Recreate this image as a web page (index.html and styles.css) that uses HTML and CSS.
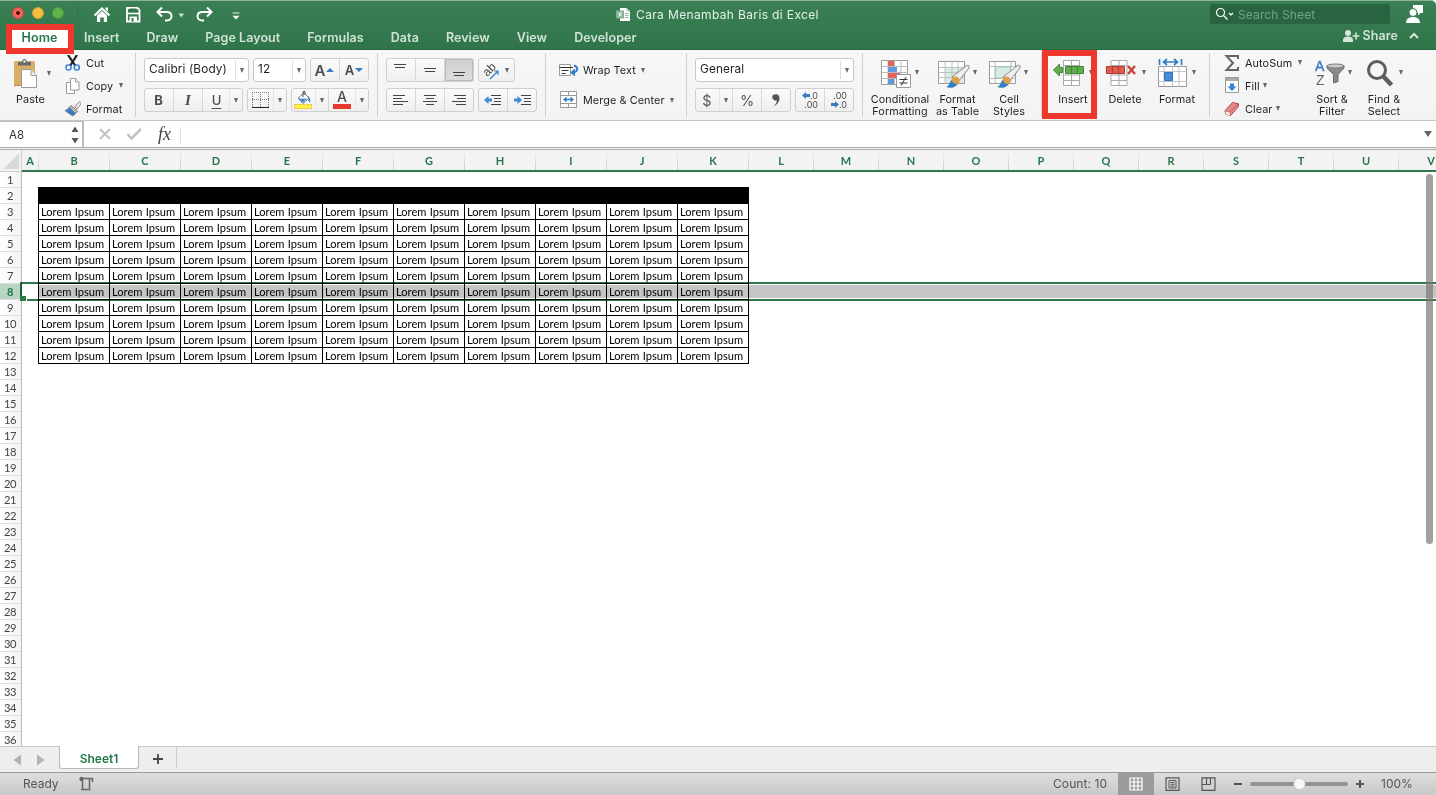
FILE: index.html
```html
<!DOCTYPE html>
<html lang="en">
<head>
<meta charset="utf-8">
<title>Cara Menambah Baris di Excel</title>
<link rel="stylesheet" href="styles.css">
</head>
<body>
<div class="app">
  <header class="top">
    <div class="titlebar">
      <div class="lights"><i class="light red"></i><i class="light yellow"></i><i class="light green"></i></div>
      <svg class="quick" width="160" height="20" viewBox="0 0 160 20" fill="none" stroke="#fff" stroke-width="2">
        <path d="M2.500 11.500 10 4.500l7.500 7" stroke-width="2.200"/><path d="M5 11.500 10 7l5 4.500V18h-3.200v-4.500H8.200V18H5z" fill="#fff" stroke="none"/><path d="M13.500 3.500h2.500v4l-2.500-2z" fill="#fff" stroke="none"/>
        <path d="M35 4h10.500l2 2v11.500H35z" stroke-width="1.800"/><path d="M37.500 4.500h7v4h-7z" fill="#2f774a" stroke="none"/><path d="M35.500 9.500h11.500" stroke-width="1.600"/><path d="M37.500 12.500h7.500v5h-7.500z" fill="#fff" stroke="none"/><path d="M39.500 14h2v3.500h-2z" fill="#2f774a" stroke="none"/>
        <path d="M70 3.500 65.500 8l4.500 4.500M66 8h8.500c3.500 0 5 2 5 4.200 0 2.500-2 4.300-4.500 4.300h-2"/>
        <path d="M86.500 9.500h5.500l-2.700 4z" fill="#cfe2d6" stroke="none"/>
        <path d="m115 3.500 4.500 4.500-4.500 4.500M119 8h-8.500c-3.500 0-5 2-5 4.200 0 2.500 2 4.300 4.500 4.300h2"/>
        <path d="M140.500 9h7" stroke-width="1.200" stroke="#cfe2d6"/><path d="M140.500 11.800h7L144 15.500z" fill="#fff" stroke="none"/>
      </svg>
      <div class="doc">
        <svg width="15" height="15" viewBox="0 0 15 15"><path d="M4 1h6.500L14 4.500V14H4z" fill="#fff"/><path d="M10.500 1v3.500H14" fill="#b9d3c3"/><path d="M9 6.500h3.500M9 8.500h3.500M9 10.500h3.500" stroke="#8bb69c"/><path d="M0 3.500h8v8H0z" fill="#7fb495"/><path d="m2.300 5.500 3.500 4m0-4-3.500 4" stroke="#fff" stroke-width="1.100"/></svg>
        <span>Cara Menambah Baris di Excel</span>
      </div>
      <div class="search">
        <svg width="22" height="16" viewBox="0 0 22 16" fill="none" stroke="#fff" stroke-width="1.200"><circle cx="6.500" cy="6.500" r="4"/><path d="m9.500 9.500 4 4M15 7l2 2 2-2"/></svg>
        <span>Search Sheet</span>
      </div>
      <svg class="person" width="20" height="20" viewBox="0 0 20 20" fill="#fff"><path d="M8 1h10v8h-2.500L13 11.500V9L8 6z"/><circle cx="8" cy="8.500" r="4" stroke="#327a4e"/><path d="M1 19c0-4 3-6 7-6s7 2 7 6z"/></svg>
    </div>
    <nav class="tabs">
      <span class="tab active">Home</span><span class="tab">Insert</span><span class="tab">Draw</span><span class="tab">Page Layout</span><span class="tab">Formulas</span><span class="tab">Data</span><span class="tab">Review</span><span class="tab">View</span><span class="tab">Developer</span>
      <div class="share">
        <svg width="18" height="14" viewBox="0 0 18 14" fill="#d5e5db"><circle cx="6" cy="4" r="3"/><path d="M1 13V11c0-2.500 2-3.500 5-3.500s5 1 5 3.500v2zM13.200 3.500h1.600v2.700h2.700v1.600h-2.700v2.700h-1.600V7.800h-2.700V6.200h2.700z"/></svg>
        <span>Share</span>
        <svg width="12" height="8" viewBox="0 0 12 8" fill="none" stroke="#d5e5db" stroke-width="2"><path d="m2 6 4-4 4 4"/></svg>
      </div>
    </nav>
    <div class="callout home-callout"></div>
  </header>

  <section class="ribbon">
    <div class="group clipboard">
      <div class="paste">
        <div class="paste-row">
          <svg width="26" height="32" viewBox="0 0 26 32"><rect x="1" y="2" width="21" height="25" rx="1.500" fill="#d9ae66"/><path d="M1.500 26.500h6" stroke="#c95d32" stroke-dasharray="2 1"/><path d="M5 6.500V3h4c0-4 5-4 5 0h4v3.500z" fill="#666b6d"/><circle cx="11.500" cy="2.500" r="1.200" fill="#eee"/><path d="M8.500 10.500H18l5.500 6v12h-15z" fill="#fff" stroke="#9a9a9a"/><path d="M18 10.500v6h5.500" fill="#eee" stroke="#9a9a9a"/></svg>
          <i class="caret"></i>
        </div>
        <span>Paste</span>
      </div>
      <div class="stack clip-actions">
        <div class="action"><svg width="16" height="16" viewBox="0 0 16 16" fill="none"><path d="m3 0 7.500 11M12 0 5 11" stroke="#222" stroke-width="2.200"/><circle cx="3.500" cy="12.500" r="2.600" stroke="#2d7bd0" stroke-width="1.400"/><circle cx="11.800" cy="12.500" r="2.600" stroke="#2d7bd0" stroke-width="1.400"/></svg><span>Cut</span></div>
        <div class="action"><svg width="16" height="18" viewBox="0 0 16 18" fill="#fff" stroke="#9a9a9a"><path d="M1.500 5.500h5l3 3v8h-8z"/><path d="M5.500 1.500h5l3.500 3.500v8h-8.500z"/><path d="M10.500 1.500V5H14"/></svg><span>Copy</span><i class="caret copy-caret"></i></div>
        <div class="action"><svg width="16" height="16" viewBox="0 0 16 16"><path d="m10 6 3.500-4.500q1-1 2 0t0 2L12 8z" fill="#eee" stroke="#888"/><path d="m6 4.500 6.500 5.500-2 2.500-6.500-6z" fill="#bbb" stroke="#777"/><path d="m4 6.500 6.500 6L8 15Q3 12 0 9.500 3 9 4 6.500z" fill="#347fc4" stroke="#6a7d8e"/></svg><span>Format</span></div>
      </div>
    </div>

    <div class="group rows font-group">
      <div class="row">
        <div class="select font-name"><span>Calibri (Body)</span><i class="caret"></i></div>
        <div class="select font-size"><span>12</span><i class="caret"></i></div>
        <div class="buttons"><b class="btn w30 grow">A<i class="tri up"></i></b><b class="btn w29 shrink">A<i class="tri down"></i></b></div>
      </div>
      <div class="row">
        <div class="buttons"><span class="btn w29 bold">B</span><span class="btn w29 italic">I</span><span class="btn w28 under">U</span><span class="btn w13"><i class="caret"></i></span></div>
        <div class="buttons"><span class="btn w27"><svg width="19" height="18" viewBox="0 0 19 18" fill="none"><path d="M1.500 1v15M17.500 1v15M9.500 1v15M1 1.500h17M1 8.500h17" stroke="#777" stroke-dasharray="1 1"/><path d="M1 16.500h17" stroke="#222"/></svg></span><span class="btn w13"><i class="caret"></i></span></div>
        <div class="buttons"><span class="btn w24"><svg width="20" height="20" viewBox="0 0 20 20"><path d="m5 8 6-5 5 5-6 5.500z" fill="#fff" stroke="#777"/><path d="M5 8.500h9l-4 4.500z" fill="#4a8fd5"/><path d="M10 7V2q1-2 2 0v3" fill="none" stroke="#444"/><path d="M15 6q3 2 2 7-2-2-2-7z" fill="#347fc4"/><path d="M1.500 14.500h17v4h-17z" fill="#fff147" stroke="#e8c62f" stroke-dasharray="3 1"/></svg></span><span class="btn w13"><i class="caret"></i></span><span class="btn w28 color-letter">A</span><span class="btn w13"><i class="caret"></i></span></div>
      </div>
    </div>

    <div class="group rows align-group">
      <div class="row">
        <div class="buttons"><span class="btn w29"><svg class="glyph" viewBox="0 0 17 14"><path d="M2 1.500h12M3 4.500h10"/></svg></span><span class="btn w29"><svg class="glyph" viewBox="0 0 17 14"><path d="M2 5.500h12M3 8.500h10"/></svg></span><span class="btn w30 pressed"><svg class="glyph" viewBox="0 0 17 14"><path d="M2 9.500h12M3 12.500h10"/></svg></span></div>
        <div class="buttons"><span class="btn w37 orient"><svg class="orient-icon" width="18" height="20" viewBox="0 0 18 20"><text x="1" y="15" transform="rotate(-45 5 12)" class="ab">ab</text><path d="m7 19 8-8m-4 0h4v4" fill="none" stroke="#347fc4" stroke-width="1.200"/></svg><i class="caret"></i></span></div>
      </div>
      <div class="row">
        <div class="buttons"><span class="btn w29"><svg class="glyph" viewBox="0 0 17 14"><path d="M1 2.500h12M1 5.500h9M1 8.500h15M1 11.500h10"/></svg></span><span class="btn w29"><svg class="glyph" viewBox="0 0 17 14"><path d="M2 2.500h12M4 5.500h8M1 8.500h14M4 11.500h8"/></svg></span><span class="btn w30"><svg class="glyph" viewBox="0 0 17 14"><path d="M3 2.500h12M6 5.500h9M1 8.500h14M5 11.500h10"/></svg></span></div>
        <div class="buttons"><span class="btn w29"><svg class="glyph" viewBox="0 0 17 14"><path d="M7 2.500h10M10 5.500h7M10 8.500h7M7 11.500h10"/><path class="blue" d="m0 7 4.500-4v2.500H8v3H4.500V11z"/></svg></span><span class="btn w30"><svg class="glyph" viewBox="0 0 17 14"><path d="M7 2.500h10M10 5.500h7M10 8.500h7M7 11.500h10"/><path class="blue" d="M8 7 3.500 3v2.500H0v3h3.500V11z"/></svg></span></div>
      </div>
    </div>

    <div class="group rows wrap-group">
      <div class="row text-row"><svg width="21" height="16" viewBox="0 0 21 16"><path d="M1.500 2.500h11v11h-11z" fill="#fff" stroke="#999"/><path d="M1.500 5.500H15M3.500 8.500h7M3.500 11.500h4" stroke="#333" fill="none"/><path d="M16 3.500q4 1.500 3 4.500-.5 2-3 2.500" fill="none" stroke="#347fc4" stroke-width="2"/><path d="m12 10.500 5-4v8z" fill="#347fc4"/></svg><span>Wrap Text</span><i class="caret"></i></div>
      <div class="row text-row"><svg width="21" height="18" viewBox="0 0 21 18" fill="#fff"><path d="M2.500.5h16v16h-16zM2.500 4.500h16M2.500 12.500h16M10.500.5v4M10.500 12.500v4" stroke="#999"/><path d="m5 8.500 3.500-3v2.300h4V5.500l3.500 3-3.500 3V9.300h-4v2.200z" fill="#347fc4"/></svg><span>Merge &amp; Center</span><i class="caret"></i></div>
    </div>

    <div class="group rows number-group">
      <div class="row"><div class="select number-format"><span>General</span><i class="caret"></i></div></div>
      <div class="row">
        <div class="buttons"><span class="btn w24 symbol">$</span><span class="btn w13"><i class="caret"></i></span><span class="btn w29 symbol">%</span><span class="btn w30"><svg width="12" height="14" viewBox="0 0 12 14"><path d="M3 2c4-2 7 0 6.500 4S6 12.500 4 13c2-2 3-4 2.700-5.500C3 8 1 4 3 2z" fill="#555"/></svg></span></div>
        <div class="buttons"><span class="btn w29 decimal"><span><svg class="arrow" viewBox="0 0 8 7"><path d="m0 3.500 4-3.500v2h4v3H4v2z"/></svg>.0</span><span>.00</span></span><span class="btn w30 decimal"><span>.00</span><span><svg class="arrow" viewBox="0 0 8 7"><path d="M8 3.500 4 0v2H0v3h4v2z"/></svg>.0</span></span></div>
      </div>
    </div>

    <div class="group styles-group">
      <div class="big cond"><div class="big-icon"><svg width="30" height="32" viewBox="0 0 30 32"><path d="M.5 2.500h26v24H.5z" fill="#fff" stroke="#999"/><path d="M.5 8.500h26M.5 14.500h26M.5 20.500h26M7 2.500v24M13.500 2.500v24M20 2.500v24" stroke="#bbb"/><path d="M7 3h6v5H7zM7 15h12v5H7z" fill="#e56358"/><path d="M7 9h9v5H7zM7 21h6v5H7z" fill="#6199dc"/><path d="M15.500 16.500h14v13h-14z" fill="#fff" stroke="#999"/><path d="M18.500 21.500h8M18.500 25h8M25 19l-5 8.500" stroke="#333"/></svg><i class="caret"></i></div><span>Conditional<br>Formatting</span></div>
      <div class="big table"><div class="big-icon"><svg width="32" height="32" viewBox="0 0 32 32"><path d="M.5 3.500h26v22H.5z" fill="#fff" stroke="#999"/><path d="M7 9h19v16H7z" fill="#d9ebe2"/><path d="M.5 9.500h26M.5 14.500h26M.5 19.500h26M7 3.500v22M14 3.500v22M20 3.500v22" stroke="#bbc6c1"/><path d="M14 19 28 8q4-2 3 2L20 24z" fill="#eee" stroke="#888"/><circle cx="17.500" cy="22.500" r="4" fill="#dfa04b"/><path d="M14 22c1 4 3 4 6 4-4 5-9 4-12 3 4-1 3-5 6-7z" fill="#347fc4"/></svg><i class="caret"></i></div><span>Format<br>as Table</span></div>
      <div class="big cell"><div class="big-icon"><svg width="32" height="32" viewBox="0 0 32 32"><path d="M.5 3.500h26v22H.5z" fill="#fff" stroke="#999"/><path d="M.5 8.500h26M.5 20.500h26M6 3.500v22M22 3.500v22" stroke="#bbb"/><path d="M6.500 9h15v11h-15z" fill="#d9ebe2" stroke="#9fcbb6"/><path d="M14 19 28 8q4-2 3 2L20 24z" fill="#eee" stroke="#888"/><circle cx="17.500" cy="22.500" r="4" fill="#dfa04b"/><path d="M14 22c1 4 3 4 6 4-4 5-9 4-12 3 4-1 3-5 6-7z" fill="#347fc4"/></svg><i class="caret"></i></div><span>Cell<br>Styles</span></div>
    </div>

    <div class="group cells-group">
      <div class="big insert"><div class="big-icon"><svg width="32" height="32" viewBox="0 0 32 32"><path d="M10.500 2.500h16v25h-16zM10.500 7.500h16M10.500 17h16M10.500 22.500h16M18.500 2.500v25" fill="#fff" stroke="#aaa"/><path d="M12.500 8.500h18v7h-18z" fill="#62ad4f" stroke="#3b8736"/><path d="M18.500 8.500v7M24.500 8.500v7" stroke="#3b8736"/><path d="m.5 12 6-6v3.500h3v5h-3V18z" fill="#62ad4f" stroke="#3b8736"/></svg><i class="caret"></i></div><span>Insert</span></div>
      <div class="big delete"><div class="big-icon"><svg width="32" height="32" viewBox="0 0 32 32"><path d="M5 2.500h16v25H5zM5 7.500h16M5 17h16M5 22.500h16M13 2.500v25" fill="#fff" stroke="#aaa"/><path d="M.5 8.500h18v7H.5z" fill="#df5b4d" stroke="#b33b30"/><path d="M6.500 8.500v7M12.500 8.500v7" stroke="#b33b30"/><path d="m22 8 7 8m0-8-7 8" stroke="#c5463a" stroke-width="2.500"/></svg><i class="caret"></i></div><span>Delete</span></div>
      <div class="big format"><div class="big-icon"><svg width="30" height="32" viewBox="0 0 30 32"><path d="M.5 8.500h28v20H.5z" fill="#fff" stroke="#999"/><path d="M.5 13.500h28M.5 23.500h28M6 8.500v20M14.500 8.500v20M21 8.500v20" stroke="#c4c4c4"/><path d="M6.500 14.500h8v8h-8z" fill="#478cdb" stroke="#3273c0"/><path d="M1.500 1v6M23.500 1v6M6 4h13M9 1 5.500 4 9 7M16 1l3.500 3L16 7" fill="none" stroke="#347fc4" stroke-width="1.700"/></svg><i class="caret"></i></div><span>Format</span></div>
      <div class="callout insert-callout"></div>
    </div>

    <div class="group editing-group">
      <div class="stack edit-actions">
        <div class="action"><svg width="16" height="16" viewBox="0 0 16 16"><path d="M14 4V1H2.500L9 8l-6.500 7H14v-3" fill="none" stroke="#666" stroke-width="2"/></svg><span>AutoSum</span><i class="caret sum-caret"></i></div>
        <div class="action"><svg width="16" height="17" viewBox="0 0 16 17"><path d="M1.500.5h13v15h-13z" fill="#fff" stroke="#999"/><path d="M2 1h12v3H2z" fill="#aaa"/><path d="M6 6.500h4v3h2.500L8 14 3.500 9.500H6z" fill="#3982d0"/></svg><span>Fill</span><i class="caret tight"></i></div>
        <div class="action"><svg width="16" height="16" viewBox="0 0 17 16"><path d="m1 10 8-9 6.500 1.500L15 6l-8 9-5-1.500z" fill="#e88889" stroke="#a5454b"/><path d="m1 10 5 1.500L15 2.500M6 11.500 7 15" fill="none" stroke="#b85a60"/><path d="m1.500 10.500 4.500 1.300.8 3-4.800-1.300z" fill="#fbe5e2"/></svg><span>Clear</span><i class="caret tight"></i></div>
      </div>
      <div class="big sort"><div class="big-icon"><svg width="31" height="32" viewBox="0 0 31 32"><text x="0" y="13" class="sort-a">A</text><text x="1" y="27" class="sort-z">Z</text><path d="M12 7.500h17v2.500l-6 6.500v7l-4.500 1.500v-8.500L12 10z" fill="#8b8b8b" stroke="#666"/><ellipse cx="20.500" cy="8" rx="8.500" ry="2" fill="#ccc" stroke="#777"/></svg><i class="caret"></i></div><span>Sort &amp;<br>Filter</span></div>
      <div class="big find"><div class="big-icon"><svg width="28" height="32" viewBox="0 0 28 32" fill="none" stroke="#5d5d5d"><circle cx="10" cy="12" r="8.500" stroke-width="3"/><path d="m16 18 8.500 9" stroke-width="4.500"/></svg><i class="caret"></i></div><span>Find &amp;<br>Select</span></div>
    </div>
  </section>

  <section class="formula">
    <div class="namebox"><span>A8</span><svg width="8" height="18" viewBox="0 0 8 18" fill="#555"><path d="m.5 6 3.500-5.500L7.500 6zM.5 12 4 17.500 7.500 12z"/></svg></div>
    <svg class="check" width="46" height="14" viewBox="0 0 46 14" fill="none" stroke="#c2c2c2" stroke-width="2"><path d="m2 2 10 10m0-10L2 12"/><path d="m29.500 7 4 4.500L43 2" stroke-width="2.500"/></svg>
    <span class="fx">fx</span>
    <div class="formula-input"></div>
    <i class="caret large"></i>
  </section>

  <main class="sheet">
    <div class="columns"><div class="corner"></div></div>
    <div class="body">
      <div class="row-heads"></div>
      <div class="cells"><div class="data"></div></div>
      <div class="selection"></div>
      <div class="selection-handle"></div>
    </div>
    <div class="scrollbar"></div>
  </main>

  <footer class="sheet-tabs">
    <svg width="59" height="24" viewBox="0 0 59 24" fill="#b3b3b3"><path d="m13.500 13 7.500-5.500v11zM44.500 13 37 7.500v11z"/></svg>
    <div class="sheet-tab">Sheet1</div>
    <div class="add-sheet"><svg width="12" height="12" viewBox="0 0 12 12"><path d="M6 1v10M1 6h10" stroke="#444" stroke-width="1.800"/></svg></div>
  </footer>
  <div class="status">
    <span class="ready">Ready</span>
    <svg width="16" height="16" viewBox="0 0 16 16" fill="none" stroke="#666" stroke-width="1.500"><path d="M5 2.500h9.500V6M11.500 3v10.500H3M4.500 5v8"/><circle cx="3.500" cy="3" r="2.200" fill="#666" stroke="none"/></svg>
    <span class="count">Count: 10</span>
    <span class="view-button current"><svg width="14" height="14" viewBox="0 0 14 14" fill="none" stroke="#fff" stroke-width="1.200"><path d="M1 1h12v12H1zM1 5h12M1 9h12M5 1v12M9 1v12"/></svg></span>
    <span class="view-button"><svg width="15" height="14" viewBox="0 0 15 14" fill="none" stroke="#555"><path d="M1 .8h13v12.500H1z" stroke-width="1.200"/><path d="M4 3.500h7v7.500H4zM5.500 5.500h4M5.500 7.300h4M5.500 9.200h4"/></svg></span>
    <span class="view-button"><svg width="15" height="14" viewBox="0 0 15 14" fill="none" stroke="#555" stroke-width="1.200"><path d="M1 .8h13v12.500H1zM1.500 7.500h8M5.500 1v6.500M9.500 1v6.500"/></svg></span>
    <svg class="zoom" width="130" height="16" viewBox="0 0 130 16"><path d="M0 8h8" stroke="#555" stroke-width="2"/><path d="M18 8h94" stroke="#939393" stroke-width="4" stroke-linecap="round"/><circle cx="65.500" cy="8" r="5.800" fill="#f7f7f7" stroke="#aaa" stroke-width=".5"/><path d="M122 8h8M126 4v8" stroke="#555" stroke-width="2"/></svg>
    <span class="percent">100%</span>
  </div>
</div>
<script src="sheet.js"></script>
</body>
</html>
```

FILE: styles.css
```css
* { box-sizing: border-box; }
body { margin: 0; overflow: hidden; font-family: Inter, "Liberation Sans", sans-serif; font-size: 10.800px; color: #1e1e1e; }
svg { display: block; flex: none; }
.app { width: 1436px; height: 795px; display: flex; flex-direction: column; background: #fff; }

/* Title bar and ribbon tabs */
.top { position: relative; height: 50px; flex: none; background: linear-gradient(#3a8054, #307549); border-top: 1px solid #8ab599; border-bottom: 1px solid #266b3f; border-radius: 0 5px 0 0; }
.titlebar { height: 26px; display: flex; align-items: center; }
.lights { width: 78px; height: 16px; padding: 1px 0 0 12px; display: flex; gap: 8px; border-right: 1px solid #2f7548; }
.light { width: 12px; height: 12px; border-radius: 50%; border: 1px solid; }
.light.red { background: radial-gradient(circle, #420b08 0 1.500px, #f3645a 2.200px); border-color: #c94a3b; }
.light.yellow { background: #f3bd43; border-color: #cfa12e; }
.light.green { background: #5fb648; border-color: #4b9a3a; }
.quick { margin: -1px 0 0 14px; }
.doc { width: 220px; margin-left: 364px; display: flex; align-items: center; gap: 5px; color: #e7f1ea; font-size: 12px; letter-spacing: .36px; white-space: nowrap; }
.search { width: 180px; height: 20px; margin-left: 374px; padding-left: 4px; display: flex; align-items: center; gap: 2px; border-radius: 3px; background: #28643f; color: #72a385; font-size: 12px; letter-spacing: .12px; }
.person { margin-left: 15px; }
.tabs { height: 22px; padding-left: 11px; display: flex; align-items: center; font-size: 12.500px; font-weight: 600; letter-spacing: .07px; color: #cfe2d6; }
.tab { margin-right: 27px; line-height: 20px; white-space: nowrap; }
.tab.active { width: 57px; height: 19px; line-height: 18px; margin-right: 16px; background: #fff; color: #26764a; text-align: center; border-radius: 2px 2px 0 0; }
.share { margin: -5px 16px 0 auto; display: flex; align-items: center; gap: 3px; }
.share svg + span { margin-right: 7px; }
.callout { position: absolute; border: 6px solid #ee372d; z-index: 3; }
.home-callout { left: 6px; top: 23px; width: 68px; height: 30px; }

/* Ribbon */
.ribbon { height: 71px; flex: none; display: flex; background: linear-gradient(#f7f7f7, #f3f3f3); border-bottom: 1px solid #c4c4c4; }
.group { position: relative; height: 70px; flex: none; display: flex; }
.group + .group { border-left: 1px solid #d0d0d0; border-image: linear-gradient(transparent 4px, #d0d0d0 4px 66px, transparent 66px) 1; }
.rows { flex-direction: column; gap: 6px; padding-top: 8px; }
.row { height: 24px; display: flex; gap: 4px; }
.caret { width: 0; height: 0; flex: none; border: 2.500px solid transparent; border-top: 5px solid #666; border-bottom: 0; }
.clipboard { width: 135px; }
.paste { width: 61px; padding-top: 6px; }
.paste-row { height: 37px; padding-left: 13px; display: flex; align-items: center; gap: 8px; }
.paste-row .caret { margin-top: -3px; }
.paste > span { display: block; text-align: center; line-height: 13px; letter-spacing: .1px; }
.stack { display: flex; flex-direction: column; }
.action { height: 23px; display: flex; align-items: center; gap: 5px; letter-spacing: .1px; white-space: nowrap; }
.action > span { padding-top: 1px; }
.clip-actions { padding: 1px 0 0 4px; }
.copy-caret { margin-left: 1px; }
.font-group { width: 242px; padding-left: 8px; }
.align-group { width: 168px; padding-left: 8px; }
.wrap-group { width: 141px; padding-left: 12px; }
.number-group { width: 176px; padding-left: 8px; }
.styles-group { width: 179px; padding-left: 5px; gap: 3px; }
.cells-group { width: 168px; padding-left: 7px; gap: 4px; }
.editing-group { width: 227px; padding-left: 14px; }
.select { height: 24px; display: flex; align-items: center; justify-content: space-between; padding: 0 4px; background: #fff; border: 1px solid #c9c9c9; border-radius: 3px; font-size: 11.800px; letter-spacing: .12px; }
.select > span { flex: 1; margin-top: -2px; }
.select::after { content: ""; width: 1px; height: 18px; background: #ddd; order: 1; margin-right: 4px; }
.select .caret { order: 2; }
.font-name { width: 105px; }
.font-size { width: 53px; }
.number-format { width: 159px; }
.buttons { height: 24px; display: flex; background: linear-gradient(#fafafa, #efefef); border: 1px solid #cfcfcf; border-radius: 3px; }
.btn { display: flex; align-items: center; justify-content: center; height: 22px; color: #4c4c4c; }
.btn:first-child { margin-left: -1px; }
.btn + .btn { border-left: 1px solid #d7d7d7; }
.w13 { width: 13px; } .w24 { width: 24px; } .w27 { width: 26px; } .w28 { width: 27px; } .w29 { width: 29px; } .w30 { width: 29px; } .w37 { width: 36px; }
.btn + .w13 { border-left-color: #e5e5e5; }
.grow { font-size: 15px; gap: 1px; font-weight: 600; } .shrink { font-size: 13px; gap: 1px; font-weight: 600; }
.tri { border: 4px solid transparent; width: 0; height: 0; }
.tri.up { border-bottom: 4px solid #347fc4; border-top: 0; }
.tri.down { border-top: 4px solid #347fc4; border-bottom: 0; }
.bold { font-weight: 700; font-size: 13px; }
.italic { font: italic bold 15px "Liberation Serif", serif; }
.under { text-decoration: underline; text-underline-offset: 3px; font-size: 13px; font-weight: 500; padding-left: 1px; }
.color-letter { font-size: 14px; font-weight: 500; line-height: 14px; align-items: flex-start; padding-top: 1px; background: linear-gradient(#e7382e, #e7382e) center 15px / 18px 5px no-repeat; }
.pressed { background: linear-gradient(#cfcfcf, #dcdcdc); box-shadow: inset 0 0 0 1px #bababa; }
.glyph { width: 17px; height: 14px; fill: none; stroke: #444; }
.glyph .blue { fill: #4389d3; stroke: none; }
.orient { gap: 4px; }
.orient-icon { overflow: visible; }
.ab { font: 12px "Liberation Sans", sans-serif; fill: #444; }
.text-row { align-items: center; gap: 4px; letter-spacing: .1px; white-space: nowrap; }
.text-row .caret { margin-left: 1px; }
.symbol { font-size: 14.500px; color: #555; }
.decimal { flex-direction: column; align-items: flex-end; padding-right: 6px; font-size: 9px; line-height: 9px; }
.decimal > span { display: flex; align-items: center; }
.arrow { width: 8px; height: 7px; fill: #347fc4; }
.big { flex: none; padding-top: 8px; text-align: center; letter-spacing: .07px; }
.big > span { display: block; margin: 4px -8px 0; line-height: 12px; white-space: nowrap; }
.big-icon { height: 32px; display: flex; align-items: center; gap: 4px; }
.big-icon .caret { margin-top: -3px; }
.cond { width: 64px; } .cond .big-icon { padding-left: 13px; }
.table { width: 47px; margin-left: -1px; } .table .big-icon { padding-left: 4px; gap: 3px; }
.cell { width: 46px; margin-left: 2px; } .cell .big-icon { padding-left: 3px; gap: 3px; }
.insert, .delete, .format { width: 48px; }
.insert .big-icon { padding-left: 4px; }
.delete .big-icon { padding-left: 5px; }
.format .big-icon { padding-left: 5px; }
.insert-callout { left: 0; top: 0; width: 55px; height: 69px; }
.edit-actions { width: 84px; padding-top: 1px; }
.tight { margin-left: -2px; }
.sum-caret { margin-left: 1px; }
.sort { width: 48px; } .sort .big-icon { padding-left: 7px; gap: 2px; }
.find { width: 48px; margin-left: 4px; } .find .big-icon { padding-left: 7px; }
.sort-a, .sort-z { font: 14px "Liberation Sans", sans-serif; }
.sort-a { fill: #347fc4; stroke: #347fc4; stroke-width: .4px; } .sort-z { fill: #666; }

/* Formula bar */
.formula { height: 29px; flex: none; display: flex; align-items: center; border-bottom: 1px solid #aaa; box-shadow: inset 0 -1px #f5f5f5, inset 0 -2px #aaa; }
.namebox { width: 84px; height: 26px; margin-top: -2px; padding: 0 3px 0 9px; display: flex; align-items: center; justify-content: space-between; border-right: 2px solid #bbb; border-top: 1px solid #bbb; font-size: 11.500px; color: #333; }
.check { margin: -2px 0 0 14px; }
.fx { width: 36px; height: 16px; padding-left: 14px; margin-top: -5px; font: italic 18px/18px "Liberation Serif", serif; color: #444; }
.formula-input { flex: 1; height: 15px; border-left: 1px solid #ddd; }
.caret.large { margin: -2px 4px 0 0; border-width: 6px 4px 0; }

/* Worksheet */
.sheet { position: relative; height: 596px; flex: none; overflow: hidden; font-family: Lato, sans-serif; }
.columns { display: flex; height: 22px; background: #f3f3f3; width: 1463px; }
.corner { width: 22px; height: 22px; flex: none; border-right: 1px solid #ccc; border-bottom: 1px solid #ccc; background: linear-gradient(135deg, transparent 50%, #d9d9d9 50%) 4px 4px / 15px 15px no-repeat; }
.column { flex: none; height: 22px; line-height: 22px; padding-right: 1px; text-align: center; font-size: 11px; font-weight: 700; color: #26764a; border-bottom: 2px solid #2d7949; background: linear-gradient(#f3f3f3, #c9c9c9) right / 1px 100% no-repeat; }
.column.a { width: 17px; } .column.wide { width: 71px; } .column.standard { width: 65px; }
.body { position: relative; display: flex; height: 574px; }
.row-heads { width: 22px; flex: none; background: linear-gradient(90deg, #fff, #f3f3f3); border-right: 1px solid #bbb; }
.row-head { height: 16px; line-height: 16px; font-size: 11.200px; letter-spacing: -.4px; padding-right: 1px; text-align: center; color: #444; border-bottom: 1px solid #dedede; }
.row-head.current { background: #b8d4c5; color: #26764a; font-weight: 700; }
.cells { flex: 1; padding: 15px 0 0 16px; }
.data { width: 711px; display: grid; grid-template-columns: repeat(10, 71px); grid-auto-rows: 16px; border-top: 1px solid #000; border-left: 1px solid #000; }
.data-cell { padding-left: 2px; border-right: 1px solid #000; border-bottom: 1px solid #000; font-size: 11.100px; word-spacing: .6px; line-height: 16px; white-space: nowrap; color: #000; }
.data-cell.heading { background: #000; }
.selection { position: absolute; left: 20px; top: 110px; right: -2px; height: 19px; border: 2px solid #2d7949; mix-blend-mode: multiply; background: linear-gradient(#c5c5c5, #c5c5c5) 16px 1px / 1500px 13px no-repeat; }
.selection-handle { position: absolute; left: 20px; top: 124px; width: 7px; height: 5px; background: #2d7949; border-right: 1px solid #fff; }
.scrollbar { position: absolute; left: 1426px; top: 24px; width: 7px; height: 370px; border-radius: 4px; background: rgba(120, 120, 120, .7); }

/* Sheet tabs and status bar */
.sheet-tabs { height: 26px; flex: none; display: flex; background: #eee; border-top: 1px solid #c7c7c7; }
.sheet-tab { width: 80px; height: 23px; margin-top: -1px; background: #fff; border: 1px solid #b8b8b8; border-top: 0; border-radius: 0 0 3px 3px; text-align: center; line-height: 25px; color: #26764a; font-size: 12px; font-weight: 600; }
.add-sheet { width: 38px; height: 21px; display: flex; align-items: center; justify-content: center; border-right: 1px solid #ccc; padding-top: 3px; }
.status { height: 23px; flex: none; display: flex; align-items: center; border-top: 1px solid #999; background: linear-gradient(#dedede, #c8c8c8); color: #555; font-size: 12px; }
.ready { width: 55px; padding-left: 23px; margin-right: 23px; }
.count { margin-left: 959px; width: 65px; white-space: nowrap; letter-spacing: .1px; }
.status > span:not(.view-button) { margin-top: -1px; }
.view-button { width: 36px; height: 22px; display: flex; align-items: center; justify-content: center; }
.view-button.current { background: #9c9c9c; }
.zoom { margin-left: 8px; }
.percent { margin-left: 17px; }
```

FILE: sheet.js
```js
const columns = document.querySelector('.columns');
const rowHeads = document.querySelector('.row-heads');
const data = document.querySelector('.data');

function add(parent, className, text) {
  const element = document.createElement('div');
  element.className = className;
  element.textContent = text;
  parent.append(element);
}

[...'ABCDEFGHIJKLMNOPQRSTUV'].forEach((letter, index) => {
  const size = index === 0 ? 'a' : index <= 10 ? 'wide' : 'standard';
  add(columns, 'column ' + size, letter);
});

for (let row = 1; row <= 36; row++) {
  add(rowHeads, row === 8 ? 'row-head current' : 'row-head', row);
}

for (let row = 2; row <= 12; row++) {
  for (let column = 0; column < 10; column++) {
    add(data, row === 2 ? 'data-cell heading' : 'data-cell', row === 2 ? '' : 'Lorem Ipsum');
  }
}
```
